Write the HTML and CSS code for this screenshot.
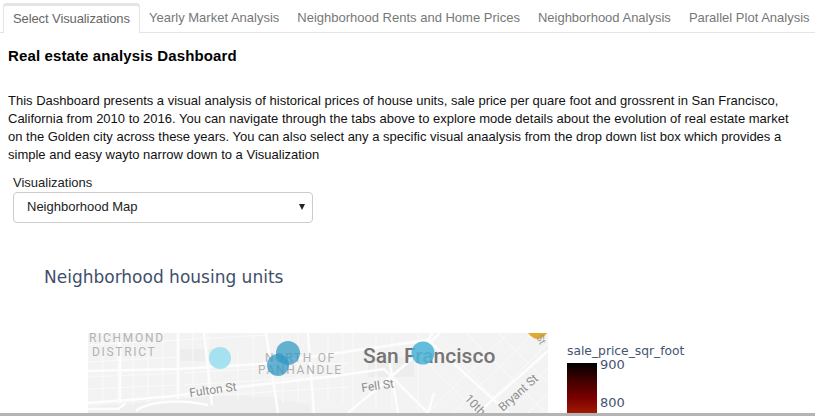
FILE: index.html
```html
<!DOCTYPE html>
<html lang="en">
<head>
<meta charset="utf-8">
<title>Real estate analysis Dashboard</title>
<link rel="stylesheet" href="styles.css">
</head>
<body>
<nav class="tabs">
  <div class="tab active">Select Visualizations</div>
  <div class="tab">Yearly Market Analysis</div>
  <div class="tab">Neighborhood Rents and Home Prices</div>
  <div class="tab">Neighborhood Analysis</div>
  <div class="tab">Parallel Plot Analysis</div>
</nav>
<main class="content">
  <h1 class="heading">Real estate analysis Dashboard</h1>
  <p class="intro">This Dashboard presents a visual analysis of historical prices of house units, sale price per quare foot and grossrent in San Francisco, California from 2010 to 2016. You can navigate through the tabs above to explore mode details about the evolution of real estate market on the Golden city across these years. You can also select any a specific visual anaalysis from the drop down list box which provides a simple and easy wayto narrow down to a Visualization</p>
  <div class="field">
    <div class="field-label">Visualizations</div>
    <div class="select"><span>Neighborhood Map</span><span class="caret"></span></div>
  </div>
  <section class="plot">
    <h2 class="plot-title">Neighborhood housing units</h2>
    <div class="plot-body">
      <svg class="map" width="460" height="80" viewBox="0 0 460 80" role="img" aria-label="Map of San Francisco">
        <rect class="land" width="460" height="80"/>
        <path class="park" d="M0 74 L70 68 L130 62 L180 64 L222 72 L222 80 L0 80Z"/>
        <path class="block" d="M92 16h46v12h-46zM280 24h46v20h-46z"/>
        <g class="minor">
          <path d="M0 12L180 2M0 29L90 24M0 44L90 40M0 56L90 52M96 40L260 30M96 52L260 42M96 64L260 54"/>
          <path d="M15 0V72M30 0V72M45 0V72M60 0V70M75 0V68M105 0V60M120 0V60M150 20V68M165 0V66M195 0V70M210 0V70M240 0V70M255 0V70M265 0V78M288 0V78M304 0V78M330 0V78"/>
          <path d="M340 80L420 0M365 80L445 0M390 80L460 10M415 80L460 35M440 80L460 60M330 20L390 80M350 8L422 80M378 0L458 80M410 0L460 50"/>
        </g>
        <g class="major">
          <path d="M0 38L90 36L172 31L270 17L340 7L345 0"/>
          <path d="M0 70L40 67L85 63L150 54L240 44L296 36"/>
          <path d="M0 76H30L38 70"/>
          <path d="M32 0V70M90 0V66M116 0L124 72M178 0L190 80M220 0L226 80"/>
          <path d="M260 80L325 25L352 0"/>
          <path d="M310 80L300 20M346 60L340 80"/>
          <path d="M390 80L460 18"/>
          <path d="M296 36L340 80M340 7L420 80"/>
          <path d="M48 78C60 68 90 66 120 72"/>
        </g>
        <path class="highway" d="M440 0Q450 12 459 0Z"/>
        <g class="labels">
          <text class="district" x="1" y="9">RICHMOND</text>
          <text class="district" x="4" y="23">DISTRICT</text>
          <text class="district" x="177" y="29">NORTH OF</text>
          <text class="district" x="170" y="41">PANHANDLE</text>
          <text class="street" transform="rotate(-8 102 64)" x="102" y="64">Fulton St</text>
          <text class="street" transform="rotate(-8 274 59)" x="274" y="59">Fell St</text>
          <text class="street" transform="rotate(-42 415 79)" x="415" y="79">Bryant St</text>
          <text class="street" transform="rotate(47 376 66)" x="376" y="66">10th</text>
          <text class="street small" transform="rotate(62 448 4)" x="448" y="4">St</text>
          <text class="city" x="275" y="30">San Francisco</text>
        </g>
        <circle class="dot light" cx="132" cy="25" r="11"/>
        <circle class="dot" cx="200" cy="20" r="12"/>
        <circle class="dot" cx="190" cy="32" r="11"/>
        <circle class="dot mid" cx="335" cy="20" r="11.5"/>
      </svg>
      <div class="legend">
        <div class="legend-title">sale_price_sqr_foot</div>
        <div class="legend-scale">
          <div class="colorbar"></div>
          <div class="ticks"><span>900</span><span>800</span></div>
        </div>
      </div>
    </div>
  </section>
</main>
<div class="bottom-bar"></div>
</body>
</html>
```
FILE: styles.css
```css
* { box-sizing: border-box; }
html, body { margin: 0; height: 416px; overflow: hidden; background: #fff; }
body { font-family: "Liberation Sans", Arial, sans-serif; color: #000; position: relative; }

.tabs { display: flex; height: 33px; padding: 3px 0 0 3px; border-bottom: 1px solid #e4e4e4; }
.tab { flex: none; padding: 0 9px; height: 29px; font-size: 13px; line-height: 29px; color: #777; white-space: nowrap; }
.tab.active { width: 137px; padding: 0 0 0 9px; background: #fff; border: 1px solid #e4e4e4; border-top: 3px solid #e4e4e4; border-bottom: 0; border-radius: 4px 4px 0 0; height: 30px; line-height: 26px; color: #666; letter-spacing: -.1px; }

.content { padding: 0 0 0 8px; }
.heading { margin: 14px 0 0; font-size: 15px; line-height: 18px; font-weight: bold; letter-spacing: .12px; }
.intro { width: 790px; margin: 27px 0 0; font-size: 13px; line-height: 18px; color: #111; }

.field { margin: 10px 0 0 5px; width: 300px; }
.field-label { font-size: 13px; line-height: 18px; color: #222; }
.select { display: flex; justify-content: space-between; align-items: center; height: 31px; padding: 0 7px 2px 13px; border: 1px solid #ccc; border-radius: 4px; font-size: 13px; color: #222; }
.caret { width: 0; height: 0; border-left: 3.5px solid transparent; border-right: 3.5px solid transparent; border-top: 6px solid #222; }

.plot { margin-top: 42px; }
.plot-title { margin: 0 0 0 36px; font-family: "DejaVu Sans", Verdana, sans-serif; font-size: 17px; line-height: 24px; font-weight: normal; color: #3f4f6b; }
.plot-body { display: flex; margin: 44px 0 0 80px; height: 80px; }
.map { display: block; flex: none; }
.land { fill: #f3f3f3; }
.park { fill: #efefef; }
.block { fill: #ededed; }
.minor path { fill: none; stroke: #fafafa; stroke-width: 1; }
.major path { fill: none; stroke: #fdfdfd; stroke-width: 2.5; }
.highway { fill: #e3a92b; }
.district { font-family: Roboto, sans-serif; font-size: 12px; letter-spacing: 1.7px; fill: #b2b2b2; }
.street { font-family: Roboto, sans-serif; font-size: 12px; fill: #8d8d8d; }
.street.small { fill: #999; font-size: 10px; }
.city { font-family: Roboto, sans-serif; font-weight: 500; font-size: 21px; fill: #757575; }
.dot { fill: #2c95c4; fill-opacity: .72; }
.dot.light { fill: #9be0ee; fill-opacity: .9; }
.dot.mid { fill: #4db5d8; fill-opacity: .88; }

.legend { margin-left: 19px; font-family: "DejaVu Sans", Verdana, sans-serif; font-size: 12px; color: #44546f; }
.legend-title { font-size: 12.3px; line-height: 14px; margin-top: 11px; }
.legend-scale { display: flex; margin-top: 5px; }
.colorbar { width: 30px; height: 50px; background: linear-gradient(#000 0%, #3a0000 30%, #7a0000 70%, #a01a00 100%); }
.ticks { display: flex; flex-direction: column; gap: 24px; margin-left: 3px; font-size: 13px; line-height: 14px; margin-top: -5px; }

.bottom-bar { position: absolute; left: 0; right: 0; bottom: 0; height: 3px; background: #b4b4b4; }
```
